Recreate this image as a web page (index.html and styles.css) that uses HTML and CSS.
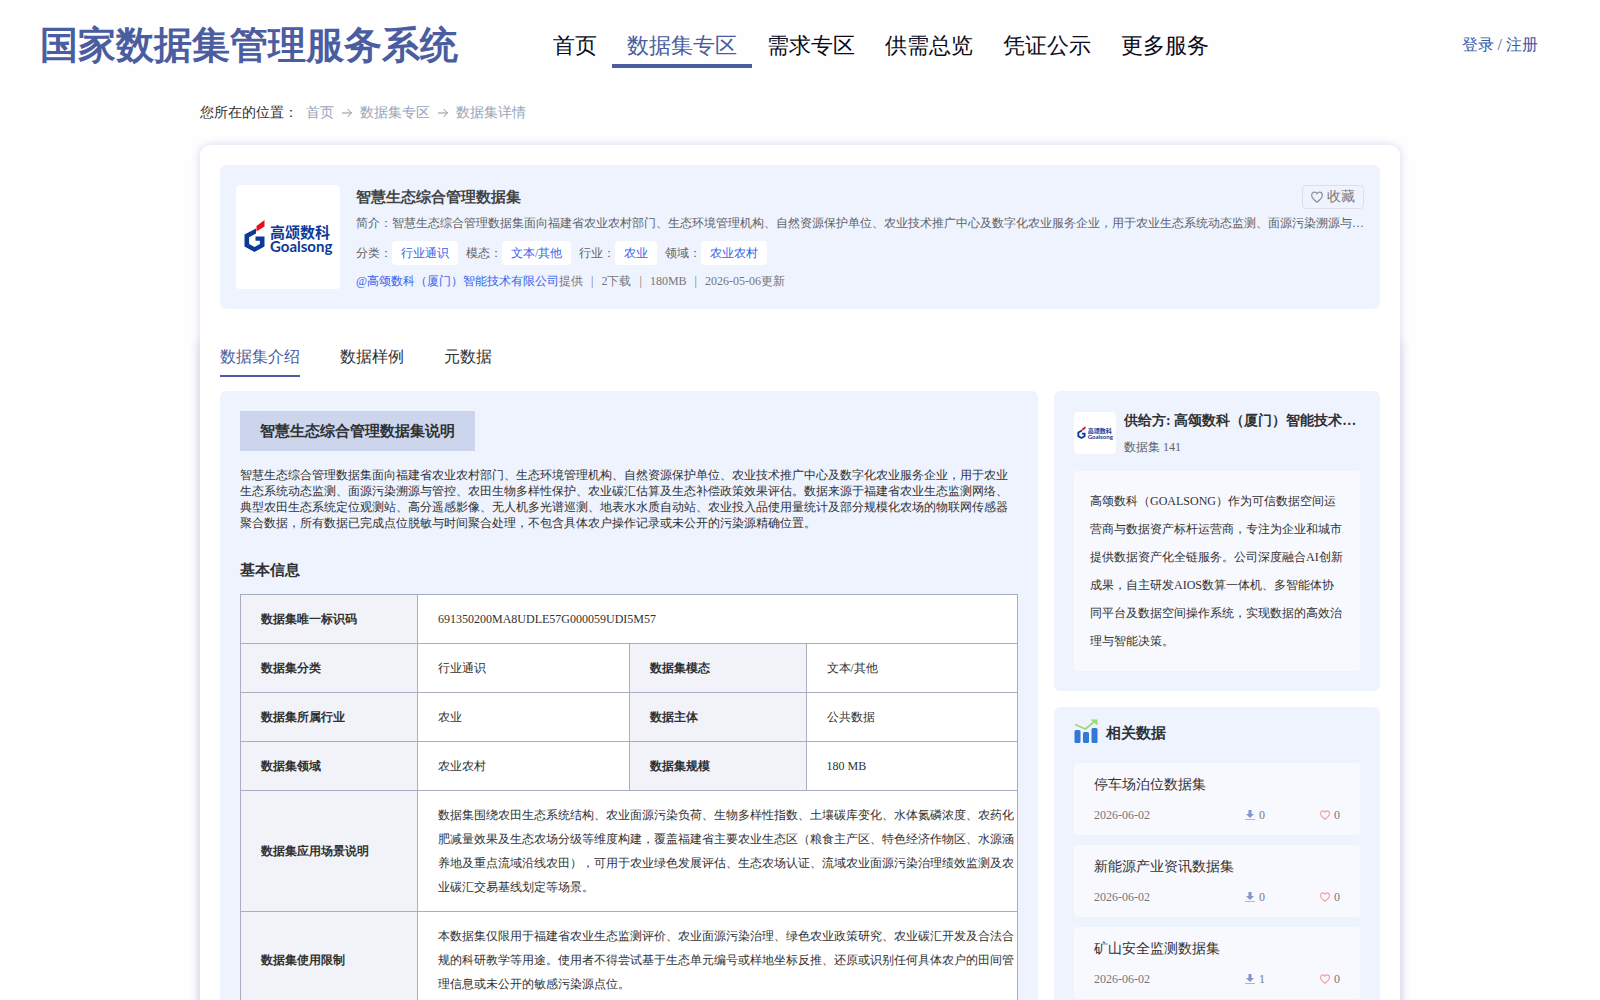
FILE: index.html
```html
<!DOCTYPE html>
<html lang="en">
<head>
<meta charset="utf-8">
<meta name="viewport" content="width=device-width, initial-scale=1">
<title>智慧生态综合管理数据集 - 国家数据集管理服务系统</title>
<link rel="stylesheet" href="styles.css">
</head>
<body>
<svg class="sprite" width="0" height="0" aria-hidden="true">
  <symbol id="arrow" viewBox="0 0 12 12"><path d="M0 6h11.400M6.800 1.400l4.600 4.600-4.600 4.600" fill="none" stroke="currentColor" stroke-width="1.200"/></symbol>
  <symbol id="heart" viewBox="0 0 14 14"><path d="M7 13C4.200 10.900 0.800 8.200 0.800 4.900 0.800 2.700 2.300 1.200 4.100 1.200 5.400 1.200 6.400 1.900 7 3 7.600 1.900 8.600 1.200 9.900 1.200 11.700 1.200 13.200 2.700 13.200 4.900 13.200 8.200 9.800 10.900 7 13Z" fill="none" stroke="currentColor" stroke-width="1.500"/></symbol>
  <symbol id="download" viewBox="0 0 10 10"><path d="M3.500 0h3v4H9L5 8 1 4h2.500z" fill="#8296c8"/><path d="M0 9.500h10" stroke="#a9b8de" stroke-width="1"/></symbol>
</svg>

<header class="site-header">
  <h1 class="site-title">国家数据集管理服务系统</h1>
  <nav class="site-nav" aria-label="主导航">
    <a href="#">首页</a>
    <a href="#" class="active">数据集专区</a>
    <a href="#">需求专区</a>
    <a href="#">供需总览</a>
    <a href="#">凭证公示</a>
    <a href="#">更多服务</a>
  </nav>
  <a href="#" class="login">登录 / 注册</a>
</header>

<div class="page">
  <nav class="crumbs" aria-label="面包屑">
    <span class="crumbs-label">您所在的位置：</span>
    <a href="#">首页</a>
    <svg><use href="#arrow"/></svg>
    <a href="#">数据集专区</a>
    <svg><use href="#arrow"/></svg>
    <a href="#">数据集详情</a>
  </nav>

  <main class="sheet">
    <section class="summary">
      <svg class="summary-logo" viewBox="0 0 104 104" role="img" aria-label="高颂数科">
        <path d="M20 43.500 8.500 49.500v12L18.500 67 28.500 61.500V51.500H19.500v4.300h4.400v3.200l-5.400 3-5.400-3v-6.700L20 48.500z" fill="#0c3a98"/>
        <path d="M20.500 41 28.500 35v6.500l-8 5z" fill="#e60f1e"/>
        <text class="brand-cn" x="34" y="53">高颂数科</text>
        <text class="brand-en" x="34" y="67">Goalsong</text>
      </svg>
      <div class="summary-body">
        <div class="summary-top">
          <h2>智慧生态综合管理数据集</h2>
          <button type="button" class="collect"><svg><use href="#heart"/></svg>收藏</button>
        </div>
        <p class="summary-text">简介：智慧生态综合管理数据集面向福建省农业农村部门、生态环境管理机构、自然资源保护单位、农业技术推广中心及数字化农业服务企业，用于农业生态系统动态监测、面源污染溯源与管控、农田生物多样性保护、农业碳汇估算及生态补偿政策效果评估。</p>
        <div class="tags">
          <div>分类：<span class="tag">行业通识</span></div>
          <div>模态：<span class="tag">文本/其他</span></div>
          <div>行业：<span class="tag">农业</span></div>
          <div>领域：<span class="tag">农业农村</span></div>
        </div>
        <div class="meta">
          <span><a href="#">@高颂数科（厦门）智能技术有限公司</a>提供</span><span>|</span><span>2下载</span><span>|</span><span>180MB</span><span>|</span><span>2026-05-06更新</span>
        </div>
      </div>
    </section>

    <div class="detail">
    <nav class="tabs" aria-label="数据集内容">
      <a href="#" class="active">数据集介绍</a>
      <a href="#">数据样例</a>
      <a href="#">元数据</a>
    </nav>

    <div class="columns">
      <article class="card intro">
        <h3 class="intro-title">智慧生态综合管理数据集说明</h3>
        <p class="intro-text">智慧生态综合管理数据集面向福建省农业农村部门、生态环境管理机构、自然资源保护单位、农业技术推广中心及数字化农业服务企业，用于农业生态系统动态监测、面源污染溯源与管控、农田生物多样性保护、农业碳汇估算及生态补偿政策效果评估。数据来源于福建省农业生态监测网络、典型农田生态系统定位观测站、高分遥感影像、无人机多光谱巡测、地表水水质自动站、农业投入品使用量统计及部分规模化农场的物联网传感器聚合数据，所有数据已完成点位脱敏与时间聚合处理，不包含具体农户操作记录或未公开的污染源精确位置。</p>
        <h3 class="block-title">基本信息</h3>
        <table class="info">
          <colgroup><col class="key"><col><col class="key"><col></colgroup>
          <tbody>
            <tr><th scope="row">数据集唯一标识码</th><td colspan="3">691350200MA8UDLE57G000059UDI5M57</td></tr>
            <tr><th scope="row">数据集分类</th><td>行业通识</td><th scope="row">数据集模态</th><td>文本/其他</td></tr>
            <tr><th scope="row">数据集所属行业</th><td>农业</td><th scope="row">数据主体</th><td>公共数据</td></tr>
            <tr><th scope="row">数据集领域</th><td>农业农村</td><th scope="row">数据集规模</th><td>180 MB</td></tr>
            <tr><th scope="row">数据集应用场景说明</th><td colspan="3">数据集围绕农田生态系统结构、农业面源污染负荷、生物多样性指数、土壤碳库变化、水体氮磷浓度、农药化肥减量效果及生态农场分级等维度构建，覆盖福建省主要农业生态区（粮食主产区、特色经济作物区、水源涵养地及重点流域沿线农田），可用于农业绿色发展评估、生态农场认证、流域农业面源污染治理绩效监测及农业碳汇交易基线划定等场景。</td></tr>
            <tr><th scope="row">数据集使用限制</th><td colspan="3">本数据集仅限用于福建省农业生态监测评价、农业面源污染治理、绿色农业政策研究、农业碳汇开发及合法合规的科研教学等用途。使用者不得尝试基于生态单元编号或样地坐标反推、还原或识别任何具体农户的田间管理信息或未公开的敏感污染源点位。</td></tr>
          </tbody>
        </table>
      </article>

      <aside class="side">
        <section class="card">
          <div class="provider">
            <svg class="provider-logo" viewBox="0 0 104 104" role="img" aria-label="高颂数科">
              <path d="M20 43.500 8.500 49.500v12L18.500 67 28.500 61.500V51.500H19.500v4.300h4.400v3.200l-5.400 3-5.400-3v-6.700L20 48.500z" fill="#0c3a98"/>
              <path d="M20.500 41 28.500 35v6.500l-8 5z" fill="#e60f1e"/>
              <text class="brand-cn" x="34" y="53">高颂数科</text>
              <text class="brand-en" x="34" y="67">Goalsong</text>
            </svg>
            <div class="provider-name">
              <h3>供给方: 高颂数科（厦门）智能技术有限公司</h3>
              <p>数据集 141</p>
            </div>
          </div>
          <p class="provider-text">高颂数科（GOALSONG）作为可信数据空间运营商与数据资产标杆运营商，专注为企业和城市提供数据资产化全链服务。公司深度融合AI创新成果，自主研发AIOS数算一体机、多智能体协同平台及数据空间操作系统，实现数据的高效治理与智能决策。</p>
        </section>

        <section class="card related">
          <h3 class="related-title">
            <svg viewBox="0 0 24 24" aria-hidden="true"><g fill="#3079d6"><rect x="0.500" y="11" width="6" height="13" rx="1.500"/><rect x="9" y="13" width="6" height="11" rx="1.500"/><rect x="17.500" y="9" width="6" height="15" rx="1.500"/></g><path d="M1 5.500 11.500 10 21 2" fill="none" stroke="#9bd87c" stroke-width="1.800"/><path d="M16.500 0.500H23.500V6.500z" fill="#9bd87c"/></svg>
            相关数据
          </h3>
          <ul>
            <li><a href="#">停车场泊位数据集</a><div class="stats"><time>2026-06-02</time><span class="stat"><svg><use href="#download"/></svg>0</span><span class="stat like"><svg><use href="#heart"/></svg>0</span></div></li>
            <li><a href="#">新能源产业资讯数据集</a><div class="stats"><time>2026-06-02</time><span class="stat"><svg><use href="#download"/></svg>0</span><span class="stat like"><svg><use href="#heart"/></svg>0</span></div></li>
            <li><a href="#">矿山安全监测数据集</a><div class="stats"><time>2026-06-02</time><span class="stat"><svg><use href="#download"/></svg>1</span><span class="stat like"><svg><use href="#heart"/></svg>0</span></div></li>
          </ul>
        </section>
      </aside>
    </div>
    </div>
  </main>
</div>
</body>
</html>
```
FILE: styles.css
```css
* { box-sizing: border-box; }

body {
  margin: 0;
  background: #fefefe;
  color: #303133;
  font-family: "Liberation Serif", serif;
  font-size: 12px;
  line-height: 16px;
}

h1, h2, h3, p, ul { margin: 0; padding: 0; }
ul { list-style: none; }
a { color: inherit; text-decoration: none; }
svg { flex: none; display: block; }
.sprite { position: absolute; }

/* Header */
.site-header {
  display: flex;
  align-items: center;
  height: 90px;
  padding: 0 62px 0 40px;
}
.site-title {
  color: #4a5da0;
  font-size: 38px;
  line-height: 56px;
  white-space: nowrap;
}
.site-nav { display: flex; margin-left: 80px; }
.site-nav a {
  padding: 6px 15px 0;
  border-bottom: 4px solid transparent;
  color: #0b0b20;
  font-size: 22px;
  line-height: 36px;
  white-space: nowrap;
}
.site-nav .active { color: #4a5da0; border-color: #4a5da0; }
.login {
  margin-left: auto;
  color: #3b5aa6;
  font-size: 16px;
  line-height: 24px;
  white-space: nowrap;
}

.page { max-width: 1200px; margin: 0 auto; }

/* Breadcrumb */
.crumbs {
  display: flex;
  align-items: center;
  gap: 8px;
  padding: 13px 0 22px;
  color: #909399;
  font-size: 14px;
  line-height: 20px;
}
.crumbs svg { width: 10px; height: 10px; }
.crumbs a { color: #97a5bd; }
.crumbs-label { color: #303133; }

/* Main sheet */
.sheet {
  padding: 20px;
  border-radius: 10px;
  background: #fff;
  box-shadow: 0 0 10px #d8d6ee;
}
.card, .summary { border-radius: 6px; background: #eef3fe; }
.summary { display: flex; gap: 16px; padding: 20px 16px; color: #606266; }
.summary-logo { width: 104px; height: 104px; border-radius: 4px; background: #fff; }
.summary-body { flex: 1; min-width: 0; }
.summary-top { display: flex; justify-content: space-between; height: 24px; }
.summary-top h2 { color: #444; font-size: 15px; line-height: 24px; }
.collect {
  display: flex;
  align-items: center;
  gap: 4px;
  padding: 0 8px;
  border: 1px solid #dcdfea;
  border-radius: 4px;
  background: none;
  color: #75777c;
  font: 14px/22px "Liberation Serif", serif;
}
.collect svg { width: 12px; height: 12px; color: #909399; }
.summary-text {
  margin-top: 4px;
  overflow: hidden;
  line-height: 20px;
  text-overflow: ellipsis;
  white-space: nowrap;
}
.tags { display: flex; gap: 8px; margin-top: 8px; line-height: 24px; }
.tags div { display: flex; }
.tag { padding: 0 9px; border-radius: 4px; background: #fff; color: #3563e9; }
.meta { display: flex; gap: 8px; margin-top: 8px; color: #75777c; }
.meta a { color: #3563e9; }

/* Tabbed detail, spans the sheet's full width */
.detail {
  margin: 28px -20px -20px;
  padding: 0 20px 20px;
  box-shadow: 0 4px 10px #d8d6ee;
  clip-path: inset(0 -20px -20px);
}
.tabs { display: flex; gap: 40px; margin-bottom: 14px; }
.tabs a {
  padding-top: 2px;
  border-bottom: 2px solid transparent;
  font-size: 16px;
  line-height: 36px;
}
.tabs .active { color: #4a5da0; border-color: #4a5da0; }

.columns { display: flex; gap: 16px; }
.card { padding: 20px; }
.intro { flex: 1; min-width: 0; }
.intro-title {
  width: fit-content;
  padding: 0 20px;
  background: #ccd5ec;
  font-size: 15px;
  line-height: 40px;
}
.intro-text { margin-top: 16px; }
.block-title { margin: 27px 0 12px; font-size: 15px; line-height: 24px; }

.info {
  width: 100%;
  border-collapse: collapse;
  table-layout: fixed;
  background: #fff;
  line-height: 24px;
}
.info .key { width: 177px; }
.info th, .info td {
  padding: 12px 0 12px 20px;
  border: 1px solid #a8aec2;
  text-align: left;
}
.info th { background: #f1f3f9; }

/* Side column */
.side { display: flex; flex: none; flex-direction: column; gap: 16px; width: 326px; }
.provider { display: flex; align-items: center; gap: 8px; height: 44px; }
.provider-logo { width: 42px; height: 42px; border-radius: 4px; background: #fff; }
.provider-name { flex: 1; min-width: 0; }
.provider-name h3 {
  overflow: hidden;
  font-size: 14px;
  line-height: 20px;
  text-overflow: ellipsis;
  white-space: nowrap;
}
.provider-name p { margin-top: 8px; color: #606266; }
.provider-text {
  margin-top: 16px;
  padding: 16px;
  border-radius: 4px;
  background: #f8f9fe;
  line-height: 28px;
}

.related { padding-top: 12px; }
.related-title { display: flex; gap: 8px; margin-bottom: 16px; font-size: 15px; line-height: 28px; }
.related-title svg { width: 24px; height: 24px; }
.related ul { display: grid; gap: 10px; }
.related li { padding: 12px 20px; border-radius: 4px; background: #f8f9fe; }
.related li a { display: block; font-size: 14px; line-height: 20px; }
.stats { display: flex; gap: 55px; margin-top: 12px; color: #75777c; }
.stat { display: flex; align-items: center; gap: 4px; }
.stat:nth-child(2) { margin-left: auto; }
.stat svg { width: 10px; height: 10px; }
.like svg { color: #f59a9e; }

.brand-cn { fill: #0c3a98; font: bold 15px "Noto Sans CJK SC", sans-serif; }
.brand-en { fill: #0c3a98; font: bold 15px Lato, sans-serif; }
```
